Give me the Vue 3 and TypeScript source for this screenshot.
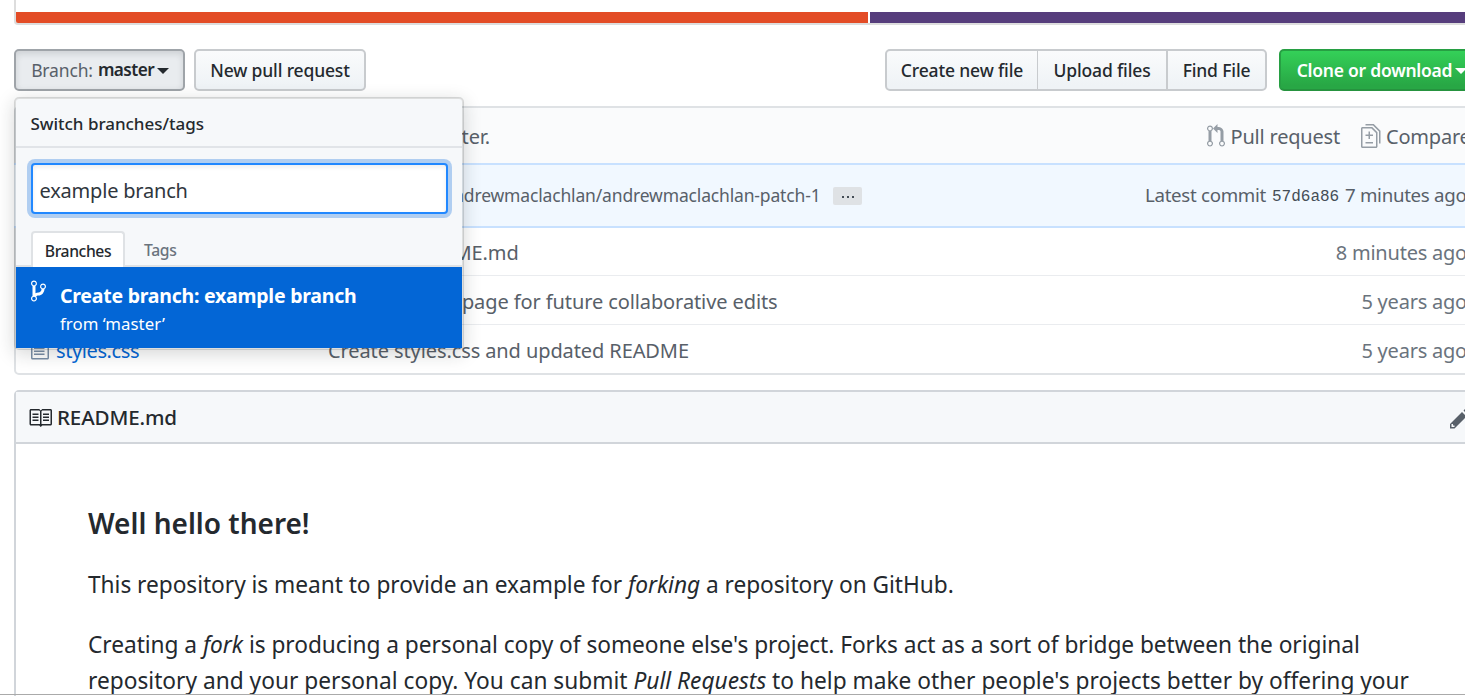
<script setup lang="ts">
import { ref } from 'vue'

interface FileRow { name: string; message: string; age: string; key: string }

const rows: FileRow[] = [
  { name: 'README.md', message: 'Update README.md', age: '8 minutes ago', key: 'readme-file' },
  { name: 'index.html', message: 'Create index page for future collaborative edits', age: '5 years ago', key: 'index-file' },
  { name: 'styles.css', message: 'Create styles.css and updated README', age: '5 years ago', key: 'styles-file' },
]
const query = ref('example branch')
const icons = {
  branch: 'M10 5c0-1.11-.89-2-2-2a1.993 1.993 0 0 0-1 3.72v.3c-.02.52-.23.98-.63 1.38-.4.4-.86.61-1.38.63-.83.02-1.48.16-2 .45V4.72a1.993 1.993 0 0 0-1-3.72C.88 1 0 1.89 0 3a2 2 0 0 0 1 1.72v6.56c-.59.35-1 .99-1 1.72 0 1.11.89 2 2 2 1.11 0 2-.89 2-2 0-.53-.2-1-.53-1.36.09-.06.48-.41.59-.47.25-.11.56-.17.94-.17 1.05-.05 1.95-.45 2.75-1.25S8.95 7.77 9 6.73h-.02C9.59 6.37 10 5.73 10 5zM2 1.8c.66 0 1.2.55 1.2 1.2 0 .65-.55 1.2-1.2 1.2C1.35 4.2.8 3.65.8 3c0-.65.55-1.2 1.2-1.2zm0 12.41c-.66 0-1.2-.55-1.2-1.2 0-.65.55-1.2 1.2-1.2.65 0 1.2.55 1.2 1.2 0 .65-.55 1.2-1.2 1.2zm6-8c-.66 0-1.2-.55-1.2-1.2 0-.65.55-1.2 1.2-1.2.65 0 1.2.55 1.2 1.2 0 .65-.55 1.2-1.2 1.2z',
  pull: 'M11 11.28V5c-.03-.78-.34-1.47-.94-2.06C9.46 2.35 8.78 2.03 8 2H7V0L4 3l3 3V4h1c.27.02.48.11.69.31.21.2.3.42.31.69v6.28A1.993 1.993 0 0 0 10 15a1.993 1.993 0 0 0 1-3.72zm-1 2.92c-.66 0-1.2-.55-1.2-1.2 0-.65.55-1.2 1.2-1.2.65 0 1.2.55 1.2 1.2 0 .65-.55 1.2-1.2 1.2zM4 3c0-1.11-.89-2-2-2a1.993 1.993 0 0 0-1 3.72v6.56A1.993 1.993 0 0 0 2 15a1.993 1.993 0 0 0 1-3.72V4.72c.59-.34 1-.98 1-1.72zm-.8 10c0 .66-.55 1.2-1.2 1.2-.65 0-1.2-.55-1.2-1.2 0-.65.55-1.2 1.2-1.2.65 0 1.2.55 1.2 1.2zM2 4.2C1.34 4.2.8 3.65.8 3c0-.65.55-1.2 1.2-1.2.65 0 1.2.55 1.2 1.2 0 .65-.55 1.2-1.2 1.2z',
  diff: 'M6 7h2v1H6v2H5V8H3V7h2V5h1v2zm-3 6h5v-1H3v1zM7.5 2L11 5.5V15c0 .55-.45 1-1 1H1c-.55 0-1-.45-1-1V3c0-.55.45-1 1-1h6.5zM10 6L7 3H1v12h9V6zM8.5 0H3v1h5l4 4v8h1V4.5L8.5 0z',
  book: 'M3 5h4v1H3V5zm0 3h4V7H3v1zm0 2h4V9H3v1zm11-5h-4v1h4V5zm0 2h-4v1h4V7zm0 2h-4v1h4V9zm2-6v9c0 .55-.45 1-1 1H9.5l-1 1-1-1H2c-.55 0-1-.45-1-1V3c0-.55.45-1 1-1h5.5l1 1 1-1H15c.55 0 1 .45 1 1zm-8 .5L7.5 3H2v9h6V3.5zm7-.5H9.5l-.5.5V12h6V3z',
  pencil: 'M0 12v3h3l8-8-3-3-8 8zm3 2H1v-2h1v1h1v1zm10.3-9.3L12 6 9 3l1.3-1.3a.996.996 0 0 1 1.41 0l1.59 1.59c.39.39.39 1.02 0 1.41z',
  file: 'M6 5H2V4h4v1zM2 8h7V7H2v1zm0 2h7V9H2v1zm0 2h7v-1H2v1zm10-7.5V14c0 .55-.45 1-1 1H1c-.55 0-1-.45-1-1V2c0-.55.45-1 1-1h7.5L12 4.5zM11 5L8 2H1v12h10V5z',
}
</script>

<template>
  <div class="page">
    <div class="stats"><div class="langs"><span class="html"></span><span class="css"></span></div></div>
    <div class="toolbar">
      <button class="btn selected"><span class="branch-label">Branch:</span><span class="branch-name">master</span><i class="caret"></i></button>
      <button class="btn new-pull">New pull request</button>
      <div class="group">
        <button class="btn create">Create new file</button>
        <button class="btn upload">Upload files</button>
        <button class="btn find">Find File</button>
      </div>
      <button class="btn green"><span>Clone or download</span><i class="caret"></i></button>
    </div>
    <div class="files">
      <div class="row compare">
        <span class="ahead">This branch is 1 commit ahead of octocat:master.</span>
        <span class="link"><svg width="18" height="24" viewBox="0 0 12 16"><path :d="icons.pull" /></svg><span class="label">Pull request</span></span>
        <span class="link"><svg width="19.5" height="24" viewBox="0 0 13 16"><path :d="icons.diff" /></svg><span class="label">Compare</span></span>
      </div>
      <div class="row commit">
        <span class="title">andrewmaclachlan/andrewmaclachlan-patch-1</span><span class="dots"><i></i><i></i><i></i></span>
        <span class="latest">Latest commit</span><span class="sha">57d6a86</span><span class="when">7 minutes ago</span>
      </div>
      <div v-for="r in rows" :key="r.name" class="row file" :class="r.key">
        <svg width="18" height="24" viewBox="0 0 12 16"><path :d="icons.file" /></svg>
        <span class="name">{{ r.name }}</span><span class="msg">{{ r.message }}</span><span class="age">{{ r.age }}</span>
      </div>
    </div>
    <div class="readme">
      <div class="head">
        <svg width="24" height="24" viewBox="0 0 16 16"><path :d="icons.book" /></svg><span>README.md</span>
        <svg class="pencil" width="21" height="24" viewBox="0 0 14 16"><path :d="icons.pencil" /></svg>
      </div>
      <article>
        <h3>Well hello there!</h3>
        <p>This repository is meant to provide an example for <em>forking</em> a repository on GitHub.</p>
        <p>Creating a <em>fork</em> is producing a personal copy of someone else's project. Forks act as a sort of bridge between the original<br><span class="second">repository and your personal copy. You can submit <em>Pull Requests</em> to help make other people's projects better by offering your</span></p>
      </article>
    </div>
    <div class="menu">
      <div class="menu-head">Switch branches/tags</div>
      <div class="menu-filter"><input v-model="query" type="text"></div>
      <div class="tabs"><span class="tab on">Branches</span><span class="tab tags">Tags</span></div>
      <div class="item">
        <svg width="15" height="24" viewBox="0 0 10 16"><path :d="icons.branch" /></svg>
        <div><strong>Create branch: {{ query }}</strong><small>from ‘master’</small></div>
      </div>
    </div>
    <div class="edge"></div>
  </div>
</template>

<style scoped>
.page { position: relative; width: 1465px; height: 696px; overflow: hidden; background: #fff; font-family: "Noto Sans", sans-serif; font-size: 20px; letter-spacing: -.13px; color: #24292e; white-space: nowrap; }
svg { flex: none; display: block; fill: currentColor; }
span { flex: none; }
.stats { margin-left: 14px; height: 25px; box-sizing: border-box; padding-top: 12px; border: 2px solid #ddd; border-width: 0 0 2px 2px; border-bottom-left-radius: 4px; }
.langs { display: flex; gap: 2px; height: 11px; }
.html { width: 852px; background: #e34c26; border-bottom-left-radius: 2px; }
.css { flex: 1; background: #563d7c; }

.toolbar { display: flex; margin: 24px 0 0 14px; height: 42px; width: 1470px; }
.btn { flex: none; box-sizing: border-box; height: 42px; margin: 0; border: 2px solid #c8cbce; border-radius: 5px; padding: 0; display: flex; align-items: center; justify-content: center; font: 500 17.5px/38px "Noto Sans", sans-serif; letter-spacing: -.15px; color: #24292e; background: linear-gradient(#fafbfc, #eff3f6 90%); white-space: nowrap; }
.selected { width: 171px; justify-content: flex-start; padding-left: 13px; background: #e9ecef; border-color: #9fa4a9; box-shadow: inset 0 3px 6px rgba(27,31,35,.13); }
.branch-label { color: #586069; font-weight: 400; width: 66px; }
.branch-name { letter-spacing: -.55px; font-size: 17.2px; font-weight: 600; width: 62px; }
.caret { flex: none; border: 6px solid transparent; border-top-color: currentColor; border-bottom: 0; margin-top: 1px; }
.new-pull { width: 172px; margin-left: 9px; }
.group { display: flex; width: 382px; margin-left: 519px; }
.group .btn { border-radius: 0; }
.group .create { width: 153px; border-right-width: 1px; border-radius: 5px 0 0 5px; }
.group .upload { width: 129px; border-left-width: 0; border-right-width: 1px; }
.group .find { width: 100px; border-left-width: 1px; border-radius: 0 5px 5px 0; }
.green { width: 205px; margin-left: 12px; padding-left: 13px; justify-content: flex-start; color: #fff; border-color: #279f43 #279f43 #26933f; background: linear-gradient(#34d058, #28a745 90%); font-weight: 600; letter-spacing: -.25px; }
.green span { width: 161px; }

.files { box-sizing: border-box; width: 1480px; height: 269px; margin: 15px 0 0 14px; border: 2px solid #dfe2e5; border-radius: 5px; }
.row { display: grid; align-items: center; box-sizing: border-box; color: #586069; }
.compare { height: 55px; grid-template-columns: 474px 717px 154px 120px; background: #fafbfc; }
.ahead { justify-self: end; padding-top: 2px; }
.link { display: flex; align-items: center; gap: 5.5px; grid-column: 3; letter-spacing: -.2px; }
.link + .link { grid-column: 4; }
.link svg { color: #959da5; }
.label { padding-top: 2px; }
.commit { height: 65px; grid-template-columns: 804.5px 12.5px 29px 283px 127px 73px 130px; background: #f1f8ff; border: 2px solid #c8e1ff; border-width: 2px 0; font-size: 18.7px; letter-spacing: -.3px; margin-left: -2px; padding-left: 2px; }
.title { grid-column: 1; justify-self: end; font-size: 17.5px; letter-spacing: -.16px; padding-bottom: 2px; }
.dots { grid-column: 3; height: 18px; display: flex; align-items: center; justify-content: center; gap: 3px; background: #dfe2e5; border-radius: 2px; }
.dots i { width: 2px; height: 2px; margin-top: 3px; background: #444d56; }
.latest { grid-column: 5; padding-bottom: 2px; }
.when { padding-bottom: 2px; }
.sha { font: 16px "Liberation Mono", monospace; letter-spacing: 0; color: #444d56; padding-top: 3px; }
.file { height: 49px; grid-template-columns: 25px 272px 1000px 139px; padding-left: 15px; border-top: 1px solid #eaecef; }
.readme-file { height: 47px; border-top: 0; }
.file span { padding-top: 2px; }
.file svg { color: #7a8fa8; }
.file .name { color: #0366d6; letter-spacing: -.4px; }
.msg { letter-spacing: -.1px; }
.readme-file .msg { padding-left: 1.5px; }
.index-file .msg { padding-left: 12px; }
.age { color: #6a737d; justify-self: end; letter-spacing: -.22px; }

.readme { box-sizing: border-box; width: 1480px; height: 400px; margin: 15px 0 0 14px; border: 2px solid #d1d5da; border-radius: 5px; }
.head { display: flex; align-items: center; height: 50px; padding-left: 12px; background: #f6f8fa; border-bottom: 2px solid #d1d5da; font-size: 20.6px; font-weight: 500; letter-spacing: -.15px; }
.head span { width: 1396px; padding-left: 5px; box-sizing: border-box; }
.head svg { margin-top: 1px; }
.pencil { color: #586069; margin-left: 2px; }
article { padding: 61px 0 0 72px; font-size: 22.7px; line-height: 36px; letter-spacing: -.036px; }
h3 { margin: 0 0 26px; font-size: 28px; font-weight: 600; line-height: 36px; letter-spacing: 0; }
p { margin: 0 0 24px; }
.second { letter-spacing: .01px; }

.menu { position: absolute; left: 14px; top: 97px; width: 450px; height: 253px; box-sizing: border-box; border: 2px solid rgba(27,31,35,.15); border-radius: 5px; background: #f6f8fa; background-clip: padding-box; box-shadow: 0 4px 18px rgba(27,31,35,.18); }
.menu-head { height: 47px; border-bottom: 2px solid #e1e4e8; padding-left: 14.5px; font-size: 17px; font-weight: 500; letter-spacing: -.03px; line-height: 49px; }
.menu-filter { padding: 15px 14px 0 15px; }
input { display: block; box-sizing: border-box; width: 417px; height: 51px; border: 2px solid #2188ff; border-radius: 4px; outline: 0; padding: 4px 6.5px 0; background: #fff; color: #2f363d; font: 20px "Noto Sans", sans-serif; letter-spacing: -.2px; box-shadow: inset 0 2px 4px rgba(27,31,35,.08), 0 0 0 4px #b0cef1; }
.tabs { display: flex; height: 36px; margin-top: 17px; padding-left: 15px; box-sizing: border-box; border-bottom: 2px solid #dfe2e5; font-size: 15.7px; font-weight: 500; line-height: 39px; }
.tab { height: 36px; box-sizing: border-box; color: #6a737d; }
.on { width: 94px; border: 2px solid #dfe2e5; border-bottom: 0; border-radius: 4px 4px 0 0; background: #fff; color: #24292e; text-align: center; line-height: 36px; letter-spacing: -.4px; }
.tags { padding-left: 19px; letter-spacing: -.35px; }
.item { display: flex; height: 81px; background: #0366d6; color: #fff; padding-left: 15px; }
.item svg { margin: 12px 14px 0 0; }
.item strong { display: block; margin-top: 15px; font-size: 19.5px; line-height: 28px; font-weight: 700; letter-spacing: -.24px; }
.item small { display: block; font-size: 16.8px; line-height: 28px; letter-spacing: .05px; }
.edge { position: absolute; left: 0; top: 694px; width: 100%; height: 1px; background: #aaa; }
</style>
